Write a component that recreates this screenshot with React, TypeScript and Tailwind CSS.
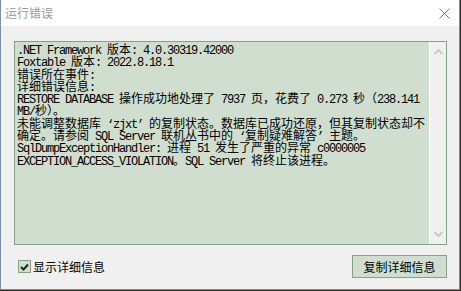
import React from 'react';

const lines = [
  '.NET Framework 版本: 4.0.30319.42000',
  'Foxtable 版本: 2022.8.18.1',
  '错误所在事件:',
  '详细错误信息:',
  'RESTORE DATABASE 操作成功地处理了 7937 页，花费了 0.273 秒（238.141',
  'MB/秒）。',
  '未能调整数据库 ‘zjxt’ 的复制状态。数据库已成功还原，但其复制状态却不',
  '确定。请参阅 SQL Server 联机丛书中的 ‘复制疑难解答’ 主题。',
  'SqlDumpExceptionHandler: 进程 51 发生了严重的异常 c0000005',
  'EXCEPTION_ACCESS_VIOLATION。SQL Server 将终止该进程。',
];

const wide = /[\u3000-\u303f\u4e00-\u9fff\uff00-\uffef]/;

// split a line into runs of wide (CJK) and narrow characters
function Line({ text }: { text: string }) {
  const parts = text.split(/([\u3000-\u303f\u4e00-\u9fff\uff00-\uffef]+)/).filter(Boolean);
  return (
    <div className="h-[12.3px] whitespace-pre leading-[12.3px]">
      {parts.map((p, i) =>
        wide.test(p) ? (
          <span key={i} className="font-['Noto_Sans_CJK_SC',sans-serif] text-[12px]">{p}</span>
        ) : (
          <span key={i} className="font-['Liberation_Mono','Noto_Sans_CJK_SC',monospace] text-[12px] tracking-[-1.2px]">{p}</span>
        )
      )}
    </div>
  );
}

export default function App() {
  return (
    <div className="w-[461px] h-[291px] bg-[#2e2823]">
      <div className="w-[460px] h-[290px] flex flex-col bg-[#f0f0f0] border-l border-r border-b border-[#7b8fa5]">
        <div className="h-[26px] bg-white flex items-center justify-between pl-[4px] pr-[9px]">
          <span className="font-['Noto_Sans_CJK_SC',sans-serif] text-[12px] text-[#9a9a9a]">运行错误</span>
          <svg width="11" height="11" viewBox="0 0 11 11">
            <path d="M0.5 0.5 L10.5 10.5 M10.5 0.5 L0.5 10.5" stroke="#7a7a7a" strokeWidth="1" />
          </svg>
        </div>
        <div className="flex-1 flex flex-col pl-[13px] pr-[12px] pt-[15px]">
          <div className="h-[204px] flex border border-[#86a086] bg-[#cfdecf]">
            <div className="flex-1 pl-[2px] text-black">
              {lines.map((l, i) => (
                <Line key={i} text={l} />
              ))}
            </div>
            <div className="w-[17px] bg-[#f0f0f0] border-l border-white flex flex-col justify-between items-center py-[7px]">
              <svg width="9" height="6" viewBox="0 0 9 6">
                <path d="M0.5 5 L4.5 1 L8.5 5" stroke="#c2c2c2" strokeWidth="1.6" fill="none" />
              </svg>
              <svg width="9" height="6" viewBox="0 0 9 6">
                <path d="M0.5 1 L4.5 5 L8.5 1" stroke="#c2c2c2" strokeWidth="1.6" fill="none" />
              </svg>
            </div>
          </div>
          <div className="flex items-center justify-between mt-[10px]">
            <label className="flex items-center gap-[2px] pl-[4px]">
              <span className="w-[13px] h-[13px] border border-[#86a086] bg-[#cfdecf] flex items-center justify-center">
                <svg width="9" height="8" viewBox="0 0 9 8">
                  <path d="M1 4 L3.5 6.5 L8 1.5" stroke="#1c2b1c" strokeWidth="2" fill="none" />
                </svg>
              </span>
              <span className="font-['Noto_Sans_CJK_SC',sans-serif] text-[12px] text-black">显示详细信息</span>
            </label>
            <button type="button" className="w-[95px] h-[23px] border border-[#86a086] bg-[#cfdecf] font-['Noto_Sans_CJK_SC',sans-serif] text-[12px] text-black">
              复制详细信息
            </button>
          </div>
        </div>
      </div>
    </div>
  );
}
